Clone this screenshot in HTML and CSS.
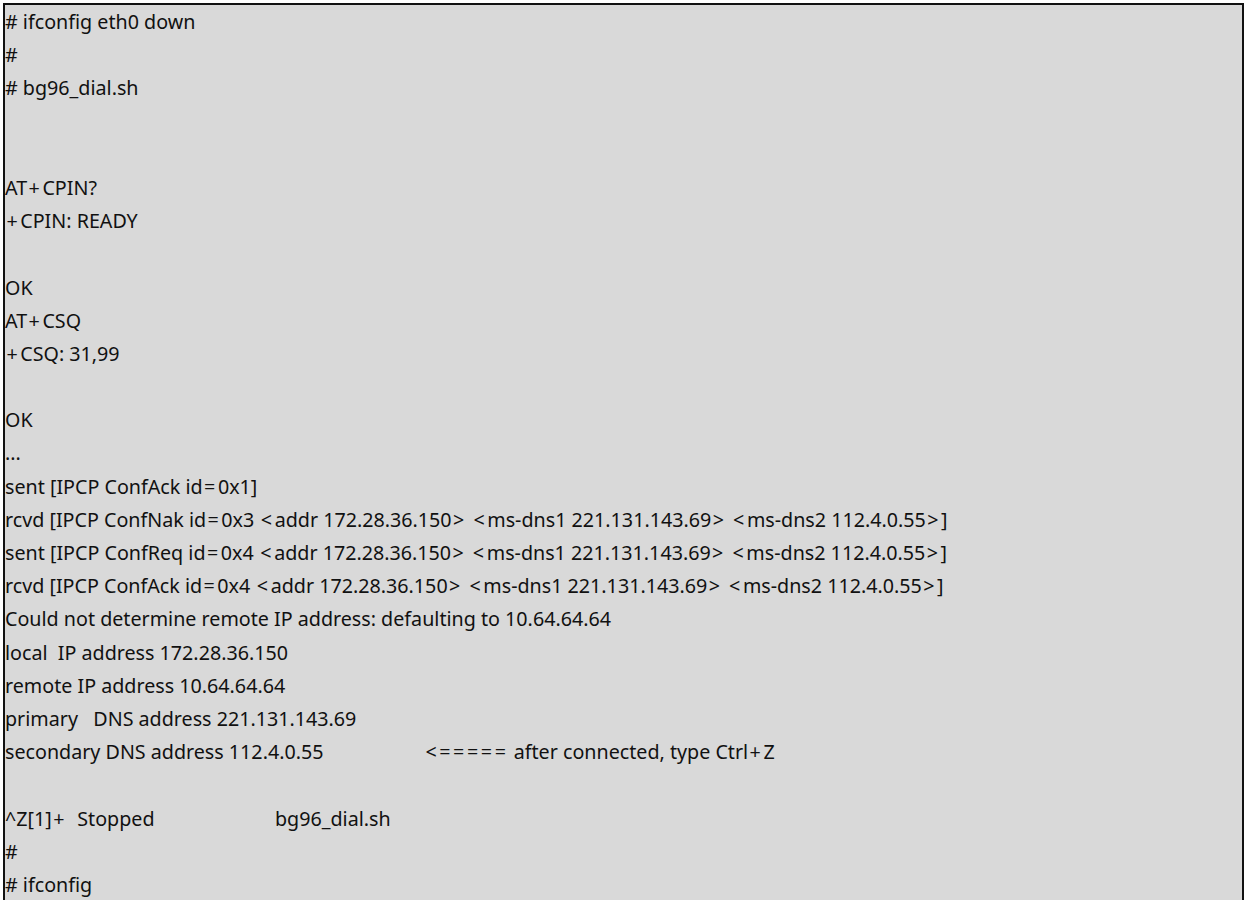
FILE: index.html
```html
<!DOCTYPE html>
<html lang="en">
<head>
    <meta charset="UTF-8" />
    <title>bg96 dial log</title>
    <link rel="stylesheet" href="styles.css">
</head>
<body>
    <div class="console">
        <div class="line"># ifconfig eth0 down</div>
        <div class="line">#</div>
        <div class="line"># bg96_dial.sh</div>
        <div class="line"> </div>
        <div class="line"> </div>
        <div class="line">AT<span class="op">+</span>CPIN?</div>
        <div class="line"><span class="op">+</span>CPIN: READY</div>
        <div class="line"> </div>
        <div class="line">OK</div>
        <div class="line">AT<span class="op">+</span>CSQ</div>
        <div class="line"><span class="op">+</span>CSQ: 31,99</div>
        <div class="line"> </div>
        <div class="line">OK</div>
        <div class="line">...</div>
        <div class="line">sent [IPCP ConfAck id<span class="op">=</span>0x1]</div>
        <div class="line">rcvd [IPCP ConfNak id<span class="op">=</span>0x3 <span class="op">&lt;</span>addr 172.28.36.150<span class="op">&gt;</span> <span class="op">&lt;</span>ms-dns1 221.131.143.69<span class="op">&gt;</span> <span class="op">&lt;</span>ms-dns2 112.4.0.55<span class="op">&gt;</span>]</div>
        <div class="line">sent [IPCP ConfReq id<span class="op">=</span>0x4 <span class="op">&lt;</span>addr 172.28.36.150<span class="op">&gt;</span> <span class="op">&lt;</span>ms-dns1 221.131.143.69<span class="op">&gt;</span> <span class="op">&lt;</span>ms-dns2 112.4.0.55<span class="op">&gt;</span>]</div>
        <div class="line">rcvd [IPCP ConfAck id<span class="op">=</span>0x4 <span class="op">&lt;</span>addr 172.28.36.150<span class="op">&gt;</span> <span class="op">&lt;</span>ms-dns1 221.131.143.69<span class="op">&gt;</span> <span class="op">&lt;</span>ms-dns2 112.4.0.55<span class="op">&gt;</span>]</div>
        <div class="line">Could not determine remote IP address: defaulting to 10.64.64.64</div>
        <div class="line">local  IP address 172.28.36.150</div>
        <div class="line">remote IP address 10.64.64.64</div>
        <div class="line">primary   DNS address 221.131.143.69</div>
        <div class="line"><span class="col-a">secondary DNS address 112.4.0.55</span><span class="op">&lt;=====</span> after connected, type Ctrl<span class="op">+</span>Z</div>
        <div class="line"> </div>
        <div class="line"><span class="col-b">^Z[1]<span class="op">+</span>  Stopped</span>bg96_dial.sh</div>
        <div class="line">#</div>
        <div class="line"># ifconfig</div>
    </div>
</body>
</html>
```

FILE: styles.css
```css
body {
    margin: 0;
    background: #fff;
}

.console {
    margin: 3px 0 0 3px;
    width: 1237px;
    height: 900px;
    background: #d9d9d9;
    border: 2px solid #111;
    border-bottom: none;
    font-family: 'Noto Sans', 'Open Sans', sans-serif;
    font-size: 19.7px;
    color: #111;
    overflow: hidden;
}

.line {
    height: 33.2px;
    line-height: 33.2px;
    white-space: pre;
}

/* operators are drawn wider in the original font */
.op {
    letter-spacing: 2.6px;
    padding-left: 1.4px;
}

.col-a {
    display: inline-block;
    width: 419px;
}

.col-b {
    display: inline-block;
    width: 270px;
}
```
